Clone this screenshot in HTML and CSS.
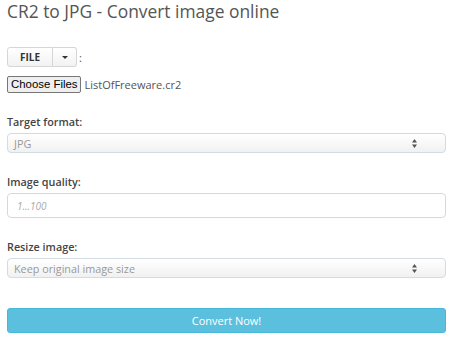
FILE: index.html
```html
<!DOCTYPE html>
<html lang="en">
<head>
    <meta charset="UTF-8">
    <title>CR2 to JPG - Convert image online</title>
    <link rel="stylesheet" href="styles.css">
</head>
<body>
    <div class="container">
        <h1>CR2 to JPG - Convert image online</h1>

        <div class="source-row">
            <div class="btn-group">
                <button class="btn-file">FILE</button>
                <button class="btn-caret"><span class="caret"></span></button>
            </div>
            <span class="colon">:</span>
        </div>

        <div class="file-row">
            <button class="choose">Choose Files</button>
            <span class="file-name">ListOfFreeware.cr2</span>
        </div>

        <div class="form-group">
            <label>Target format:</label>
            <div class="select">
                <span>JPG</span>
                <svg width="5" height="9" viewBox="0 0 5 9"><path d="M2.5 0L5 3.5H0Z M2.5 9L5 5.5H0Z" fill="#555"/></svg>
            </div>
        </div>

        <div class="form-group">
            <label>Image quality:</label>
            <input type="text" class="text-input" placeholder="1...100">
        </div>

        <div class="form-group">
            <label>Resize image:</label>
            <div class="select">
                <span>Keep original image size</span>
                <svg width="5" height="9" viewBox="0 0 5 9"><path d="M2.5 0L5 3.5H0Z M2.5 9L5 5.5H0Z" fill="#555"/></svg>
            </div>
        </div>

        <button class="convert">Convert Now!</button>
    </div>
</body>
</html>
```
FILE: styles.css
```css
body {
    margin: 0;
    padding: 0;
    background: #fff;
    font-family: "Open Sans", sans-serif;
}

.container {
    padding: 0 4px 0 7px;
}

h1 {
    margin: 0;
    font-size: 17.4px;
    line-height: 22px;
    font-weight: 400;
    color: #555;
}

.source-row {
    display: flex;
    align-items: center;
    margin-top: 25px;
}

.btn-group {
    display: flex;
    height: 20px;
}

.btn-group button {
    margin: 0;
    height: 20px;
    border: 1px solid #d6d6d6;
    background: linear-gradient(#fff, #f2f2f2);
    font-family: "Open Sans", sans-serif;
    padding: 0;
}

.btn-file {
    width: 46px;
    border-radius: 3px 0 0 3px;
    font-size: 10px;
    font-weight: 700;
    color: #333;
}

.btn-caret {
    width: 24px;
    border-left: none !important;
    border-radius: 0 3px 3px 0;
    display: flex;
    align-items: center;
    justify-content: center;
}

.caret {
    width: 0;
    height: 0;
    border-left: 3px solid transparent;
    border-right: 3px solid transparent;
    border-top: 3px solid #333;
}

.colon {
    margin-left: 2px;
    font-size: 11px;
    color: #555;
}

.file-row {
    display: flex;
    align-items: center;
    margin-top: 9px;
}

.choose {
    height: 17px;
    padding: 0 3px;
    white-space: nowrap;
    border: 1px solid #767676;
    border-radius: 2px;
    background: #efefef;
    font-family: "Liberation Sans", Arial, sans-serif;
    font-size: 11.4px;
    line-height: 15px;
    color: #000;
}

.file-name {
    margin-left: 3px;
    font-size: 11px;
    color: #555;
}

.form-group {
    margin-top: 22px;
}

.form-group label {
    display: block;
    font-size: 10.8px;
    line-height: 14px;
    font-weight: 600;
    color: #444;
    margin-bottom: 4px;
}

.select {
    height: 20px;
    box-sizing: border-box;
    border: 1px solid #d3dbe2;
    border-radius: 4px;
    background: linear-gradient(#fff, #f1f1f1);
    display: flex;
    align-items: center;
    justify-content: space-between;
    padding: 0 28px 0 6px;
    font-size: 10.8px;
    color: #999;
}

.text-input {
    display: block;
    width: 100%;
    height: 25px;
    box-sizing: border-box;
    border: 1px solid #d8d8d8;
    border-radius: 4px;
    padding: 0 9px;
    font-family: "Open Sans", sans-serif;
    font-size: 10px;
    outline: none;
}

.text-input::placeholder {
    color: #aaa;
    font-style: italic;
}

.convert {
    display: block;
    width: 100%;
    height: 25px;
    margin-top: 30px;
    border: 1px solid #46b8da;
    border-radius: 3px;
    background: #5bc0de;
    color: #fff;
    font-family: "Open Sans", sans-serif;
    font-size: 11px;
}
```
